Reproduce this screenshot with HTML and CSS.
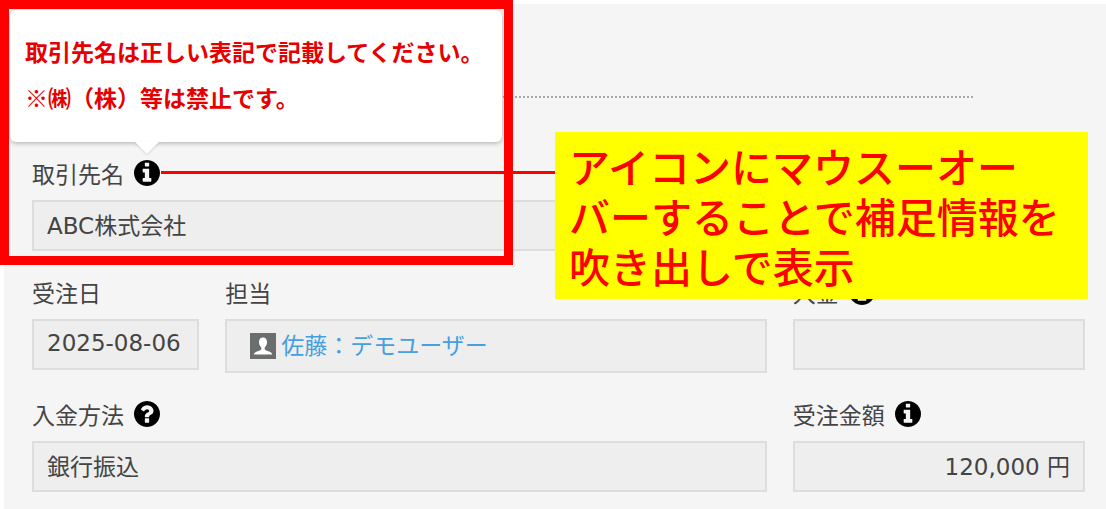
FILE: index.html
```html
<!DOCTYPE html>
<html lang="ja">
<head>
    <meta charset="UTF-8">
    <meta name="viewport" content="width=device-width, initial-scale=1.0">
    <title>受注情報</title>
    <link rel="stylesheet" href="styles.css">
</head>
<body>
    <svg class="symbols" aria-hidden="true">
        <symbol id="info" viewBox="128 128 1536 1536">
            <path d="M1152 1376v-160q0-14-9-23t-23-9h-96v-512q0-14-9-23t-23-9h-320q-14 0-23 9t-9 23v160q0 14 9 23t23 9h96v320h-96q-14 0-23 9t-9 23v160q0 14 9 23t23 9h448q14 0 23-9t9-23zm-128-896v-160q0-14-9-23t-23-9h-192q-14 0-23 9t-9 23v160q0 14 9 23t23 9h192q14 0 23-9t9-23zm640 416q0 209-103 385.5t-279.5 279.5-385.5 103-385.5-103-279.5-279.5-103-385.5 103-385.5 279.5-279.5 385.5-103 385.5 103 279.5 279.5 103 385.5z"/>
        </symbol>
        <symbol id="question" viewBox="128 128 1536 1536">
            <path d="M1024 1376v-192q0-14-9-23t-23-9h-192q-14 0-23 9t-9 23v192q0 14 9 23t23 9h192q14 0 23-9t9-23zm256-672q0-88-55.5-163t-138.5-116-170-41q-243 0-371 213-15 24 8 42l132 100q7 6 19 6 16 0 25-12 53-68 86-92 34-24 86-24 48 0 85.5 26t37.5 59q0 38-20 61t-68 45q-63 28-115.5 86.5t-52.5 125.5v36q0 14 9 23t23 9h192q14 0 23-9t9-23q0-19 21.5-49.5t54.5-49.5q32-18 49-28.5t46-35 44.5-48 28-60.5 12.5-81zm384 192q0 209-103 385.5t-279.5 279.5-385.5 103-385.5-103-279.5-279.5-103-385.5 103-385.5 279.5-279.5 385.5-103 385.5 103 279.5 279.5 103 385.5z"/>
        </symbol>
    </svg>

    <main class="sheet">
        <hr class="divider">
        <form class="fields">
            <div class="field full">
                <div class="label-row">
                    <label for="client">取引先名</label>
                    <button type="button" class="hint" aria-label="取引先名の説明" aria-describedby="clientTip">
                        <svg><use href="#info"/></svg>
                    </button>
                </div>
                <input type="text" id="client" value="ABC株式会社" readonly>
            </div>

            <div class="field">
                <div class="label-row"><label for="orderDate">受注日</label></div>
                <input type="text" id="orderDate" value="2025-08-06" readonly>
            </div>
            <div class="field">
                <div class="label-row"><span>担当</span></div>
                <div class="user-box">
                    <svg class="avatar" viewBox="0 0 26 26" aria-hidden="true">
                        <rect width="26" height="26" fill="#6b6e6e"/>
                        <path fill="#fff" d="M13 4.500C10.300 4.500 9 6.500 9 9.300c0 2.300 1 4.200 2.300 5.200v1.800c-.5 1.200-2.300 1.600-4.300 2.300-1.900.7-3 1.400-3.200 2.900h18.400c-.2-1.500-1.300-2.200-3.200-2.900-2-.7-3.800-1.100-4.300-2.300v-1.800C16 13.500 17 11.600 17 9.300c0-2.800-1.300-4.800-4-4.800z"/>
                    </svg>
                    <a href="#user">佐藤：デモユーザー</a>
                </div>
            </div>
            <div class="field">
                <div class="label-row">
                    <label for="payment">入金</label>
                    <button type="button" class="hint" aria-label="入金の説明">
                        <svg><use href="#info"/></svg>
                    </button>
                </div>
                <input type="text" id="payment" readonly>
            </div>

            <div class="field wide">
                <div class="label-row">
                    <label for="method">入金方法</label>
                    <button type="button" class="hint" aria-label="入金方法の説明">
                        <svg><use href="#question"/></svg>
                    </button>
                </div>
                <input type="text" id="method" value="銀行振込" readonly>
            </div>
            <div class="field">
                <div class="label-row">
                    <label for="amount">受注金額</label>
                    <button type="button" class="hint" aria-label="受注金額の説明">
                        <svg><use href="#info"/></svg>
                    </button>
                </div>
                <input type="text" id="amount" class="number" value="120,000 円" readonly>
            </div>
        </form>
    </main>

    <div class="tooltip" id="clientTip" role="tooltip">
        取引先名は正しい表記で記載してください。<br>
        ※㈱（株）等は禁止です。
    </div>

    <div class="frame"></div>
    <div class="leader"></div>
    <p class="callout">アイコンにマウスーオー<br>バーすることで補足情報を<br>吹き出しで表示</p>
</body>
</html>
```

FILE: styles.css
```css
* {
    box-sizing: border-box;
}

body {
    margin: 0;
    background: #fff;
    color: #444;
    font-family: 'DejaVu Sans', 'Noto Sans CJK JP', sans-serif;
    font-size: 23px;
    position: relative;
}

.symbols {
    display: none;
}

.sheet {
    min-height: 100vh;
    margin-left: 4px;
    padding: 92px 21px 16px 28px;
    border-top: 4px solid #fff;
    background: #f5f5f5;
}

.divider {
    margin: 0 112px 60px 0;
    border: none;
    border-top: 2px dotted #aaa;
}

.fields {
    display: grid;
    grid-template-columns: 167fr 541fr 292fr;
    align-items: start;
    gap: 26px;
}

.field {
    min-width: 0;
}

.full {
    grid-column: span 3;
}

.wide {
    grid-column: span 2;
}

.label-row {
    display: flex;
    align-items: center;
    gap: 10px;
    height: 34px;
    margin-bottom: 8px;
    line-height: 34px;
}

.hint {
    width: 26px;
    height: 26px;
    margin-bottom: 4px;
    padding: 0;
    border: none;
    background: none;
    color: #000;
    cursor: pointer;
}

.hint svg {
    display: block;
    width: 26px;
    height: 26px;
    fill: currentColor;
}

input,
.user-box {
    display: block;
    width: 100%;
    height: 51px;
    padding: 0 13px 4px;
    border: 2px solid #ddd;
    border-radius: 0;
    background: #eee;
    color: #444;
    font: inherit;
}

input:focus {
    outline: none;
    border-color: #4a9fe0;
}

.number {
    text-align: right;
}

.user-box {
    display: flex;
    align-items: center;
    gap: 5px;
    height: 54px;
    padding: 0 13px 0 23px;
}

.user-box a {
    padding-bottom: 4px;
    color: #459fe0;
    text-decoration: none;
}

.avatar {
    flex: none;
    width: 26px;
    height: 26px;
}

.tooltip {
    position: absolute;
    top: 10px;
    left: 10px;
    width: 492px;
    padding: 18px 15px 22px;
    border-radius: 6px;
    background: #fff;
    box-shadow: 0 1px 5px rgba(0, 0, 0, 0.3);
    color: #e60000;
    font-family: 'Noto Sans CJK JP', sans-serif;
    font-weight: bold;
    line-height: 46px;
}

.tooltip::after {
    content: '';
    position: absolute;
    top: 100%;
    left: 125px;
    border: 12px solid transparent;
    border-top-color: #fff;
    border-bottom: none;
    filter: drop-shadow(0 1px 1px rgba(0, 0, 0, 0.15));
}

.frame {
    position: absolute;
    top: 0;
    left: 0;
    width: 513px;
    height: 265px;
    border: 9px solid #f00;
    pointer-events: none;
}

.leader {
    position: absolute;
    top: 171px;
    left: 161px;
    width: 394px;
    height: 3px;
    background: #f00;
}

.callout {
    position: absolute;
    top: 132px;
    left: 555px;
    width: 533px;
    margin: 0;
    padding: 8px 14px 9px;
    background: #ff0;
    color: #f00;
    font-family: 'Noto Sans CJK JP', sans-serif;
    font-size: 41px;
    font-weight: 500;
    line-height: 50px;
}
```
